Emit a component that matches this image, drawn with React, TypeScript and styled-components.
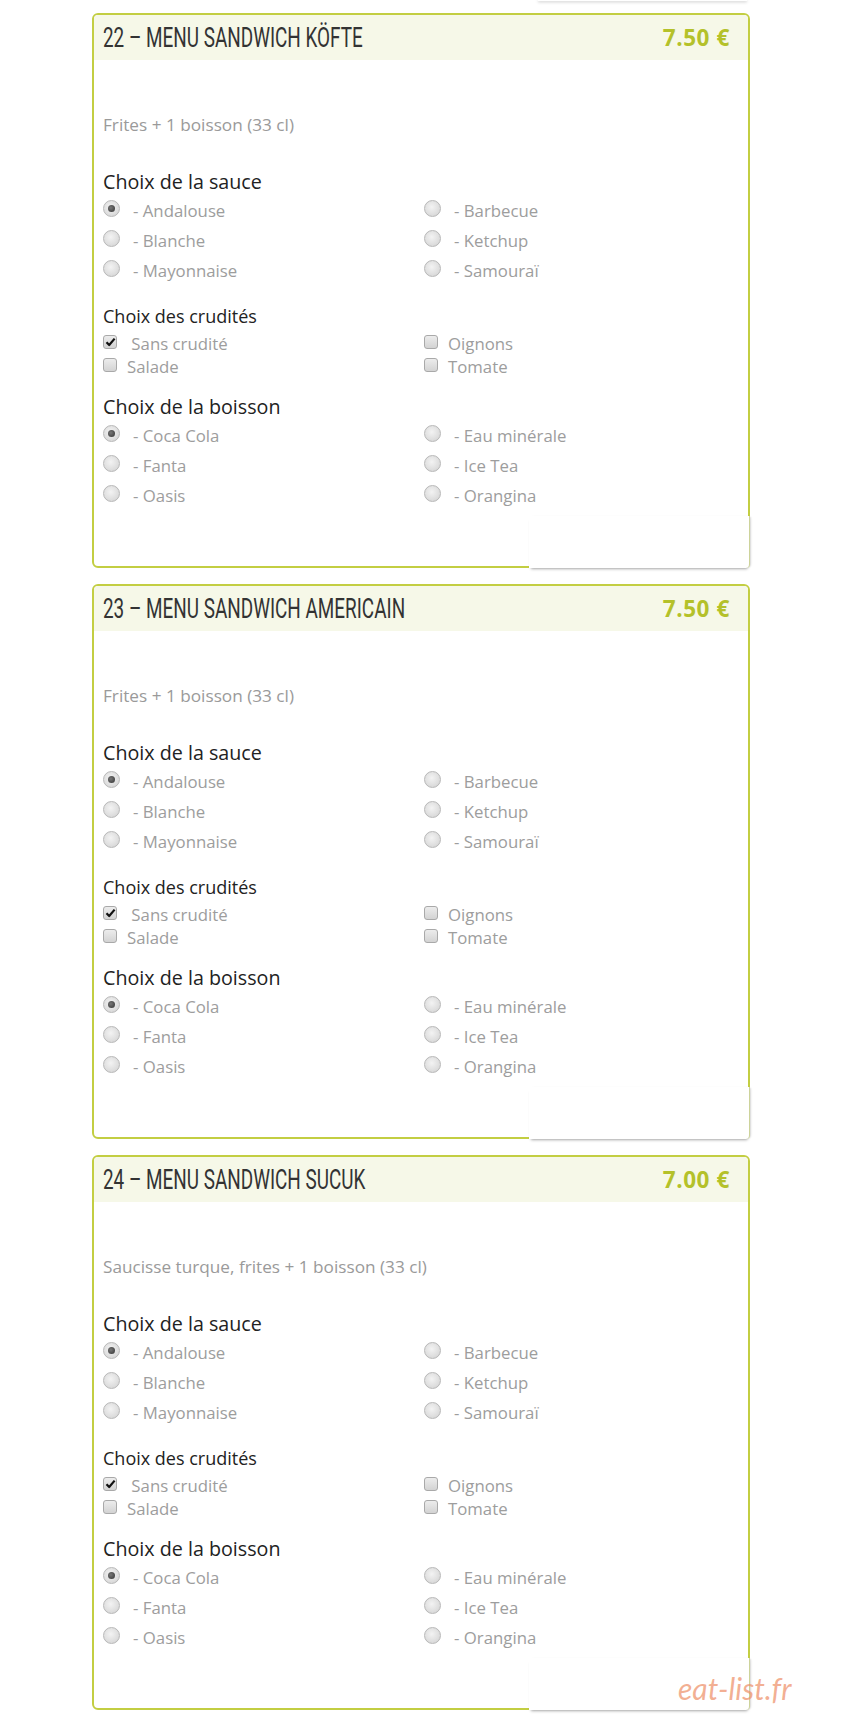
import React from 'react'
import styled, { createGlobalStyle } from 'styled-components'

const Global = createGlobalStyle`
  body {
    margin: 0;
    background: #fff;
    font-family: 'Open Sans', 'DejaVu Sans', sans-serif;
  }
`

const Page = styled.main`
  position: relative;
  display: flex;
  flex-direction: column;
  padding: 0 0 16px 92px;
`

const TopStub = styled.div`
  width: 209px;
  height: 1px;
  margin: 0 0 12px 446px;
  background: #fff;
  box-shadow: 0 1px 3px rgba(0, 0, 0, 0.35);
`

const Card = styled.section`
  position: relative;
  box-sizing: border-box;
  width: 658px;
  border: 2px solid #c3ce42;
  border-radius: 6px;
  background: #fff;

  & + & {
    margin-top: 16px;
  }
`

const Patch = styled.div`
  position: absolute;
  right: -2px;
  bottom: -2px;
  width: 220px;
  height: 52px;
  background: #fff;
  border-right: 1px solid #cdd39a;
  border-radius: 0 0 4px 0;
  box-shadow: 0 3px 3px -2px rgba(0, 0, 0, 0.35), 2px 0 2px -1px rgba(0, 0, 0, 0.15);
`

const Header = styled.header`
  display: flex;
  align-items: center;
  justify-content: space-between;
  height: 45px;
  padding: 0 18px 0 9px;
  background: #f6f8e8;
  border-radius: 4px 4px 0 0;
`

const Title = styled.h2`
  margin: 0;
  font-family: Roboto, 'DejaVu Sans', sans-serif;
  font-size: 27px;
  font-weight: 400;
  color: #333;
  white-space: nowrap;
  transform: scaleX(0.7);
  transform-origin: left center;
`

const Price = styled.span`
  font-size: 22.5px;
  font-weight: 700;
  color: #b4c12a;
  letter-spacing: 0.6px;
`

const Body = styled.div`
  padding: 0 10px 56px 9px;
`

const Desc = styled.p`
  margin: 54px 0 0;
  font-size: 17.2px;
  line-height: 22px;
  color: #9a9a9a;
`

const Heading = styled.h3<{ small?: boolean; gapTop: number }>`
  margin: ${(p) => p.gapTop}px 0 0;
  font-size: ${(p) => (p.small ? '18px' : '19.7px')};
  line-height: ${(p) => (p.small ? '22px' : '24px')};
  font-weight: 400;
  color: #222;
`

const Options = styled.div<{ rows: number; rowH: number; gapTop: number }>`
  display: grid;
  grid-template-columns: 321px 1fr;
  grid-template-rows: ${(p) => `repeat(${p.rows}, ${p.rowH}px)`};
  grid-auto-flow: column;
  margin-top: ${(p) => p.gapTop}px;
`

const Option = styled.label`
  display: flex;
  align-items: center;
  font-size: 16.8px;
  color: #9d9d9d;
  white-space: pre;
`

const RadioDot = styled.span<{ checked?: boolean }>`
  position: relative;
  box-sizing: border-box;
  width: 17px;
  height: 17px;
  margin: -4px 13px 0 0;
  border: 1px solid #b8b8b8;
  border-radius: 50%;
  background: radial-gradient(circle at 45% 40%, #f3f3f3 0%, #e0e0e0 55%, #cfcfcf 100%);

  &::after {
    content: '';
    display: ${(p) => (p.checked ? 'block' : 'none')};
    position: absolute;
    left: 4px;
    top: 4px;
    width: 7px;
    height: 7px;
    border-radius: 50%;
    background: radial-gradient(circle at 40% 40%, #777, #333);
  }
`

const CheckBox = styled.span`
  display: inline-flex;
  align-items: center;
  justify-content: center;
  box-sizing: border-box;
  width: 14px;
  height: 14px;
  margin: -3px 10px 0 0;
  border: 1px solid #a9a9a9;
  border-radius: 3px;
  background: linear-gradient(#ececec, #d3d3d3);
`

const Watermark = styled.div`
  position: absolute;
  left: 678px;
  top: 1670px;
  font-family: Lato, 'Open Sans', sans-serif;
  font-style: italic;
  font-weight: 400;
  font-size: 30px;
  color: rgba(238, 145, 105, 0.72);
`

type Item = { label: string; checked?: boolean }

const sauces: Item[] = [
  { label: '- Andalouse', checked: true },
  { label: '- Blanche' },
  { label: '- Mayonnaise' },
  { label: '- Barbecue' },
  { label: '- Ketchup' },
  { label: '- Samouraï' },
]

const crudites: Item[] = [
  { label: '\u00a0Sans crudité', checked: true },
  { label: 'Salade' },
  { label: 'Oignons' },
  { label: 'Tomate' },
]

const drinks: Item[] = [
  { label: '- Coca Cola', checked: true },
  { label: '- Fanta' },
  { label: '- Oasis' },
  { label: '- Eau minérale' },
  { label: '- Ice Tea' },
  { label: '- Orangina' },
]

const menus = [
  { title: '22 – MENU SANDWICH KÖFTE', price: '7.50 €', desc: 'Frites + 1 boisson (33 cl)' },
  { title: '23 – MENU SANDWICH AMERICAIN', price: '7.50 €', desc: 'Frites + 1 boisson (33 cl)' },
  { title: '24 – MENU SANDWICH SUCUK', price: '7.00 €', desc: 'Saucisse turque, frites + 1 boisson (33 cl)' },
]

const Check = () => (
  <svg width="11" height="10" viewBox="0 0 11 10">
    <path d="M1.5 5.2 L4.2 8 L9.6 1.6" fill="none" stroke="#111" strokeWidth="2.2" strokeLinejoin="round" />
  </svg>
)

const RadioList = ({ items, gapTop }: { items: Item[]; gapTop: number }) => (
  <Options rows={3} rowH={30} gapTop={gapTop}>
    {items.map((i) => (
      <Option key={i.label}>
        <RadioDot checked={i.checked} />
        {i.label}
      </Option>
    ))}
  </Options>
)

const MenuCard = ({ title, price, desc }: { title: string; price: string; desc: string }) => (
  <Card>
    <Header>
      <Title>{title}</Title>
      <Price>{price}</Price>
    </Header>
    <Body>
      <Desc>{desc}</Desc>
      <Heading gapTop={34}>Choix de la sauce</Heading>
      <RadioList items={sauces} gapTop={1} />
      <Heading small gapTop={20}>Choix des crudités</Heading>
      <Options rows={2} rowH={23} gapTop={5}>
        {crudites.map((i) => (
          <Option key={i.label}>
            <CheckBox>{i.checked && <Check />}</CheckBox>
            {i.label}
          </Option>
        ))}
      </Options>
      <Heading gapTop={17}>Choix de la boisson</Heading>
      <RadioList items={drinks} gapTop={1} />
    </Body>
    <Patch />
  </Card>
)

export default function App() {
  return (
    <Page>
      <Global />
      <TopStub />
      {menus.map((m) => (
        <MenuCard key={m.title} {...m} />
      ))}
      <Watermark>eat-list.fr</Watermark>
    </Page>
  )
}
